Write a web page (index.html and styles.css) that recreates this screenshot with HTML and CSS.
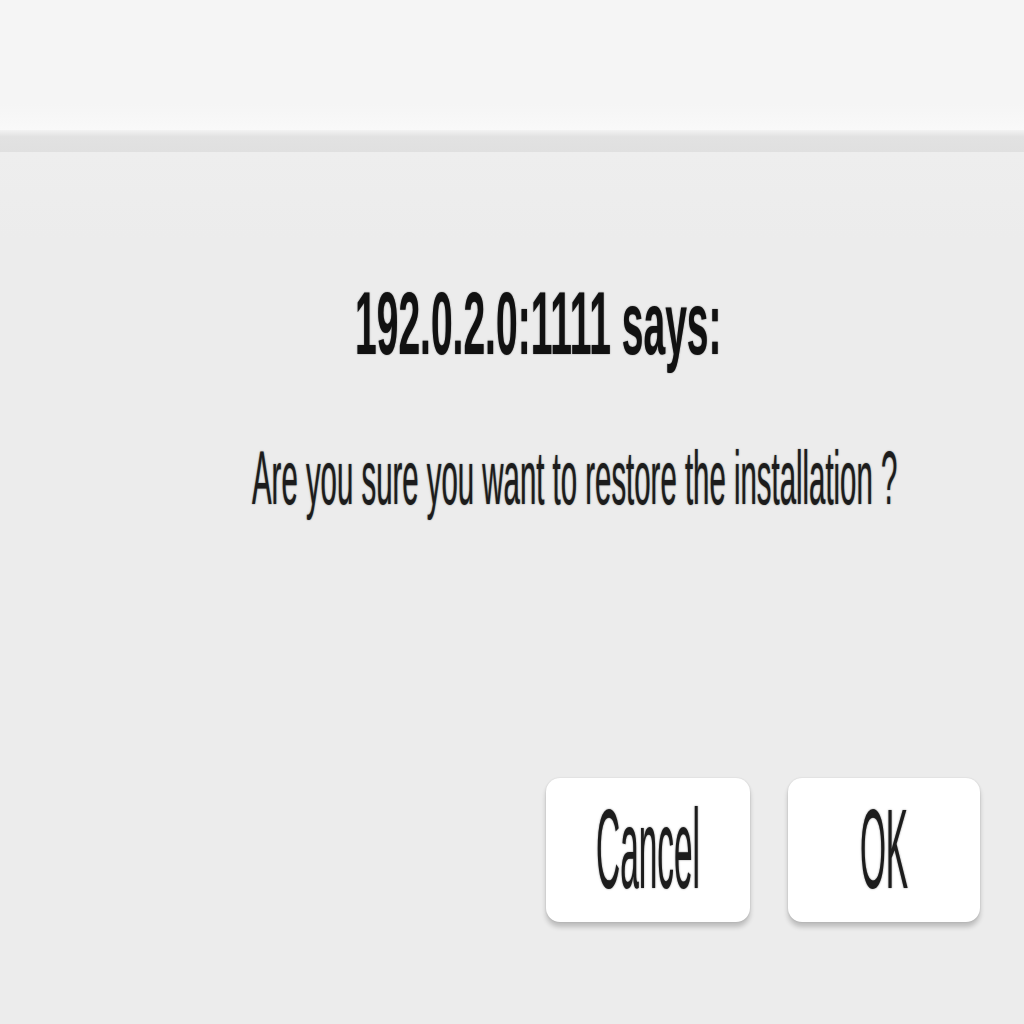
FILE: index.html
```html
<!DOCTYPE html>
<html lang="en">

<head>
    <meta charset="UTF-8" />
    <meta name="viewport" content="width=device-width, initial-scale=1.0" />
    <title>Confirm</title>
    <link rel="stylesheet" href="styles.css">
</head>

<body>
    <header class="topbar"></header>
    <div class="divider"></div>

    <main class="dialog">
        <h1 class="dialog-title"><span>192.0.2.0:1111 says:</span></h1>
        <p class="dialog-message"><span>Are you sure you want to restore the installation ?</span></p>

        <div class="dialog-buttons">
            <button class="btn btn-cancel"><span>Cancel</span></button>
            <button class="btn btn-ok"><span>OK</span></button>
        </div>
    </main>
</body>

</html>
```

FILE: styles.css
```css
* {
    margin: 0;
    padding: 0;
    box-sizing: border-box;
}

body {
    font-family: 'Liberation Sans', Arial, sans-serif;
    background-color: #ececec;
    color: #161616;
    min-height: 100vh;
    display: flex;
    flex-direction: column;
}

.topbar {
    height: 130px;
    background: linear-gradient(#f5f5f5 0%, #f5f5f5 80%, #f9f9f9 100%);
}

.divider {
    height: 22px;
    background: linear-gradient(#f3f3f3 0%, #e2e2e2 30%, #e0e0e0 100%);
}

.dialog {
    flex: 1;
    display: flex;
    flex-direction: column;
    background: linear-gradient(#eeeeee 0%, #ececec 10%);
}

.dialog-title {
    margin-top: 126px;
    padding-left: 355px;
    font-size: 39px;
    line-height: 39px;
    font-weight: bold;
    color: #111;
    text-shadow: 0 0 1px rgba(0, 0, 0, 0.5);
}

.dialog-title span {
    display: inline-block;
    transform: scaleY(2.3);
    transform-origin: left top;
}

.dialog-message {
    margin-top: 122px;
    padding-left: 252px;
    font-size: 29.4px;
    line-height: 29px;
    color: #1c1c1c;
    text-shadow: 0 0 1px rgba(0, 0, 0, 0.5);
}

.dialog-message span {
    display: inline-block;
    transform: scaleY(2.6);
    transform-origin: left top;
    white-space: nowrap;
}

.dialog-buttons {
    display: flex;
    justify-content: flex-end;
    gap: 38px;
    padding-right: 44px;
    margin-top: 310px;
}

.btn {
    height: 144px;
    border: none;
    border-radius: 14px;
    background: #fff;
    box-shadow: 0 5px 5px rgba(0, 0, 0, 0.2), 0 0 2px rgba(0, 0, 0, 0.14);
    font-family: 'Liberation Sans', Arial, sans-serif;
    font-size: 33.4px;
    line-height: 1;
    color: #1c1c1c;
    text-shadow: 0 0 1px rgba(0, 0, 0, 0.5);
    display: flex;
    align-items: center;
    justify-content: center;
    cursor: pointer;
}

.btn span {
    display: inline-block;
    transform: scaleY(3.4);
}

.btn-cancel {
    width: 204px;
}

.btn-ok {
    width: 192px;
}
```
